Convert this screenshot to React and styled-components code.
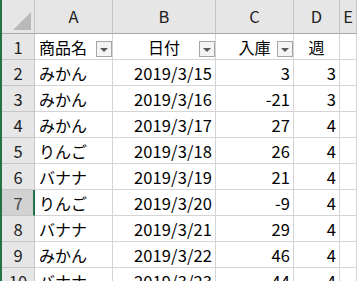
import React from "react";
import styled, { createGlobalStyle } from "styled-components";

const Global = createGlobalStyle`
  html, body { margin: 0; padding: 0; background: #fff; overflow: hidden; }
  body { font-family: "Noto Sans CJK JP", "Noto Sans", sans-serif; }
`;

const Sheet = styled.div`
  display: flex;
  width: 357px;
  height: 281px;
  overflow: hidden;
`;

const GreenBar = styled.div`
  width: 2px;
  flex: none;
  background: #217346;
`;

const Grid = styled.div`
  flex: 1;
  display: grid;
  grid-template-columns: 33px 78px 103px 78px 46px 1fr;
  grid-template-rows: 34px repeat(10, 26px);
  align-content: start;
`;

const Cell = styled.div`
  position: relative;
  box-sizing: border-box;
  border-right: 1px solid #d4d4d4;
  border-bottom: 1px solid #d4d4d4;
  display: flex;
  align-items: center;
  justify-content: ${(p) => p.$align || "flex-start"};
  padding: 0 ${(p) => (p.$align === "flex-end" ? "3px" : "0")} 0 ${(p) => (p.$align === "flex-start" || !p.$align ? "4px" : "0")};
  font-size: 16px;
  color: #000;
  white-space: nowrap;
  overflow: visible;
`;

const NumText = styled.span`
  font-family: "Noto Sans CJK JP", sans-serif;
  font-size: 16.5px;
  letter-spacing: 0.1px;
`;

const ColHead = styled.div`
  box-sizing: border-box;
  background: #e6e6e6;
  border-right: 1px solid #c6c6c6;
  border-bottom: 1px solid #a9a9a9;
  display: flex;
  align-items: flex-end;
  justify-content: center;
  padding-bottom: 5px;
  font-size: 16.5px;
  color: #222;
`;

const Corner = styled.div`
  position: relative;
  box-sizing: border-box;
  background: #e6e6e6;
  border-right: 1px solid #c6c6c6;
  border-bottom: 1px solid #a9a9a9;
  display: flex;
  align-items: flex-end;
  justify-content: flex-end;
  padding: 0 3px 3px 0;
`;

const CornerTri = styled.div`
  width: 0;
  height: 0;
  border-style: solid;
  border-width: 0 0 18px 18px;
  border-color: transparent transparent #b9b9b9 transparent;
`;

const RowHead = styled.div`
  box-sizing: border-box;
  background: ${(p) => (p.$active ? "#d2d2d2" : "#e6e6e6")};
  border-right: ${(p) => (p.$active ? "2px solid #217346" : "1px solid #c6c6c6")};
  border-bottom: 1px solid #c6c6c6;
  display: flex;
  align-items: center;
  justify-content: center;
  font-size: 16.5px;
  color: ${(p) => (p.$active ? "#444" : "#222")};
  padding-left: ${(p) => (p.$active ? "1px" : "0")};
`;

const HeaderLabel = styled.span`
  font-size: 16px;
`;

const FilterBtn = styled.div`
  position: absolute;
  right: 0;
  top: 7px;
  width: 16px;
  height: 16px;
  box-sizing: border-box;
  border: 1px solid #a6a6a6;
  background: #f4f4f4;
  display: flex;
  align-items: center;
  justify-content: center;
`;

const Arrow = styled.div`
  width: 0;
  height: 0;
  margin-top: 1px;
  border-left: 4px solid transparent;
  border-right: 4px solid transparent;
  border-top: 4px solid #595959;
`;

const columns = ["A", "B", "C", "D", "E"];

const data = [
  ["みかん", "2019/3/15", "3", "3"],
  ["みかん", "2019/3/16", "-21", "3"],
  ["みかん", "2019/3/17", "27", "4"],
  ["りんご", "2019/3/18", "26", "4"],
  ["バナナ", "2019/3/19", "21", "4"],
  ["りんご", "2019/3/20", "-9", "4"],
  ["バナナ", "2019/3/21", "29", "4"],
  ["みかん", "2019/3/22", "46", "4"],
  ["バナナ", "2019/3/23", "44", "4"],
];

const Filter = () => (
  <FilterBtn>
    <Arrow />
  </FilterBtn>
);

export default function App() {
  return (
    <>
      <Global />
      <Sheet>
        <GreenBar />
        <Grid>
          <Corner>
            <CornerTri />
          </Corner>
          {columns.map((c) => (
            <ColHead key={c}>{c}</ColHead>
          ))}

          <RowHead>1</RowHead>
          <Cell $align="flex-start">
            <HeaderLabel>商品名</HeaderLabel>
            <Filter />
          </Cell>
          <Cell $align="center">
            <HeaderLabel>日付</HeaderLabel>
            <Filter />
          </Cell>
          <Cell $align="center">
            <HeaderLabel>入庫</HeaderLabel>
            <Filter />
          </Cell>
          <Cell $align="center">
            <HeaderLabel>週</HeaderLabel>
          </Cell>
          <Cell />

          {data.map((row, i) => (
            <React.Fragment key={i}>
              <RowHead $active={i + 2 === 7}>{i + 2}</RowHead>
              <Cell $align="flex-start">{row[0]}</Cell>
              <Cell $align="flex-end">
                <NumText>{row[1]}</NumText>
              </Cell>
              <Cell $align="flex-end">
                <NumText>{row[2]}</NumText>
              </Cell>
              <Cell $align="flex-end">
                <NumText>{row[3]}</NumText>
              </Cell>
              <Cell />
            </React.Fragment>
          ))}
        </Grid>
      </Sheet>
    </>
  );
}
